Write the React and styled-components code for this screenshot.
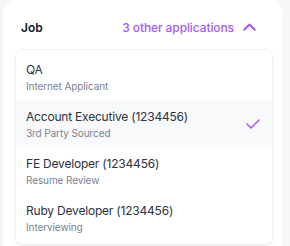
import React from "react";
import styled, { createGlobalStyle } from "styled-components";

const Global = createGlobalStyle`
  html, body { margin: 0; padding: 0; background: #f6f6f7; }
  body { font-family: Inter, "Noto Sans", sans-serif; -webkit-font-smoothing: antialiased; }
`;

const Page = styled.div`
  width: 290px;
  height: 246px;
  overflow: hidden;
  padding: 0 8px 0 3px;
  box-sizing: border-box;
`;

const Card = styled.div`
  background: #ffffff;
  border-radius: 12px;
  padding: 12px 10px 0 13px;
  height: 260px;
  box-sizing: border-box;
`;

const Header = styled.div`
  display: flex;
  align-items: center;
  justify-content: space-between;
  height: 30px;
  padding: 0 16px 0 5px;
`;

const Label = styled.div`
  font-size: 12px;
  font-weight: 600;
  color: #111827;
`;

const Toggle = styled.div`
  display: flex;
  align-items: center;
  gap: 9px;
  color: #a35cf2;
  font-size: 12px;
  font-weight: 500;
  letter-spacing: -0.1px;
`;

const Panel = styled.div`
  margin-top: 8px;
  padding: 3px 0;
  background: #fff;
  border-radius: 7px;
  box-shadow: 0 0 0 1px rgba(17, 24, 39, 0.04), 0 2px 6px rgba(17, 24, 39, 0.06);
  overflow: hidden;
`;

const Row = styled.div`
  display: flex;
  align-items: center;
  justify-content: space-between;
  height: 47px;
  box-sizing: border-box;
  padding: 1px 12px 0 10px;
  background: ${(p) => (p.$selected ? "#f8f9fa" : "#fff")};
`;

const Texts = styled.div`
  display: flex;
  flex-direction: column;
  gap: 2px;
`;

const Title = styled.div`
  font-size: 12px;
  color: #2b3240;
  line-height: 16px;
  letter-spacing: -0.2px;
`;

const Sub = styled.div`
  font-size: 10px;
  color: #7b8290;
  line-height: 13px;
  letter-spacing: -0.1px;
`;

const items = [
  { t: "QA", s: "Internet Applicant" },
  { t: "Account Executive (1234456)", s: "3rd Party Sourced", sel: true },
  { t: "FE Developer (1234456)", s: "Resume Review" },
  { t: "Ruby Developer (1234456)", s: "Interviewing" },
];

export default function App() {
  return (
    <Page>
      <Global />
      <Card>
        <Header>
          <Label>Job</Label>
          <Toggle>
            3 other applications
            <svg width="13" height="8" viewBox="0 0 13 8" fill="none">
              <path d="M1.2 6.8L6.5 1.5L11.8 6.8" stroke="#a35cf2" strokeWidth="2" strokeLinecap="round" strokeLinejoin="round" />
            </svg>
          </Toggle>
        </Header>
        <Panel>
          {items.map((it) => (
            <Row key={it.t} $selected={it.sel}>
              <Texts>
                <Title>{it.t}</Title>
                <Sub>{it.s}</Sub>
              </Texts>
              {it.sel && (
                <svg width="14" height="10" viewBox="0 0 14 10" fill="none">
                  <path d="M1 5L5 9L13 1" stroke="#a35cf2" strokeWidth="1.6" strokeLinecap="round" strokeLinejoin="round" />
                </svg>
              )}
            </Row>
          ))}
        </Panel>
      </Card>
    </Page>
  );
}
